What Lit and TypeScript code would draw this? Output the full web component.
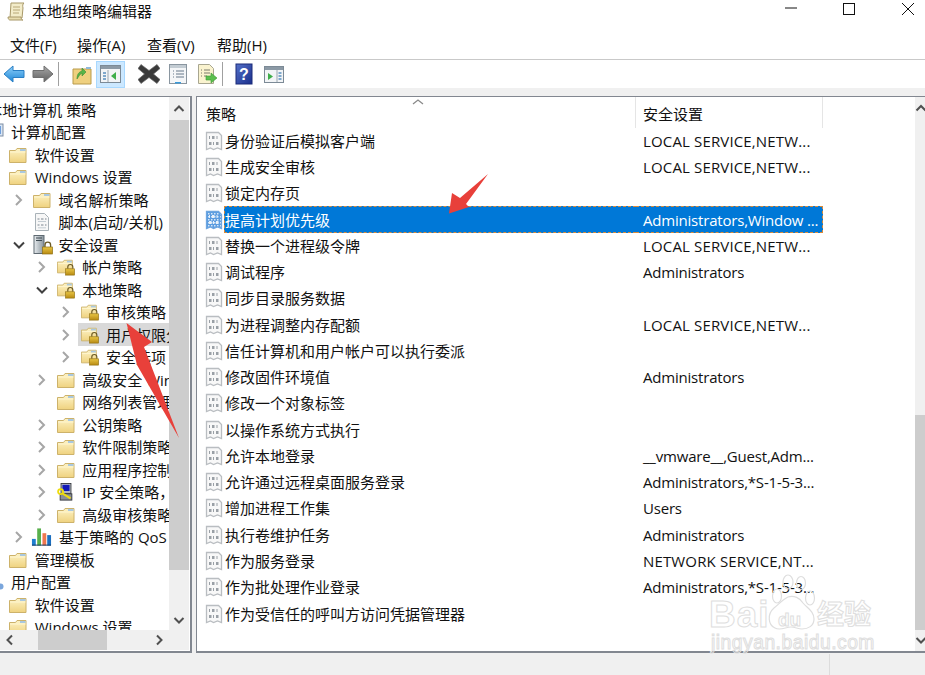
import { LitElement, html, css, svg } from "lit";
import { customElement } from "lit/decorators.js";

type Row = { t: string; d: number; c?: "r" | "d"; i: string; sel?: boolean };

const TREE: Row[] = [
  { t: "本地计算机 策略", d: -1, i: "none" },
  { t: "计算机配置", d: 0, i: "pc" },
  { t: "软件设置", d: 1, i: "folder" },
  { t: "Windows 设置", d: 1, i: "folder" },
  { t: "域名解析策略", d: 2, c: "r", i: "folder" },
  { t: "脚本(启动/关机)", d: 2, i: "script" },
  { t: "安全设置", d: 2, c: "d", i: "server" },
  { t: "帐户策略", d: 3, c: "r", i: "lock" },
  { t: "本地策略", d: 3, c: "d", i: "lock" },
  { t: "审核策略", d: 4, c: "r", i: "lock" },
  { t: "用户权限分配", d: 4, c: "r", i: "lock", sel: true },
  { t: "安全选项", d: 4, c: "r", i: "lock" },
  { t: "高级安全 Windows 防火墙", d: 3, c: "r", i: "folder" },
  { t: "网络列表管理器策略", d: 3, i: "folder" },
  { t: "公钥策略", d: 3, c: "r", i: "folder" },
  { t: "软件限制策略", d: 3, c: "r", i: "folder" },
  { t: "应用程序控制策略", d: 3, c: "r", i: "folder" },
  { t: "IP 安全策略，在 本地计算机", d: 3, c: "r", i: "ip" },
  { t: "高级审核策略配置", d: 3, c: "r", i: "folder" },
  { t: "基于策略的 QoS", d: 2, c: "r", i: "qos" },
  { t: "管理模板", d: 1, i: "folder" },
  { t: "用户配置", d: 0, i: "user" },
  { t: "软件设置", d: 1, i: "folder" },
  { t: "Windows 设置", d: 1, i: "folder" },
];

const LS = "LOCAL SERVICE,NETW...";
const POLICIES: [string, string][] = [
  ["身份验证后模拟客户端", LS],
  ["生成安全审核", LS],
  ["锁定内存页", ""],
  ["提高计划优先级", "Administrators,Window ..."],
  ["替换一个进程级令牌", LS],
  ["调试程序", "Administrators"],
  ["同步目录服务数据", ""],
  ["为进程调整内存配额", LS],
  ["信任计算机和用户帐户可以执行委派", ""],
  ["修改固件环境值", "Administrators"],
  ["修改一个对象标签", ""],
  ["以操作系统方式执行", ""],
  ["允许本地登录", "__vmware__,Guest,Adm..."],
  ["允许通过远程桌面服务登录", "Administrators,*S-1-5-3..."],
  ["增加进程工作集", "Users"],
  ["执行卷维护任务", "Administrators"],
  ["作为服务登录", "NETWORK SERVICE,NT..."],
  ["作为批处理作业登录", "Administrators,*S-1-5-3..."],
  ["作为受信任的呼叫方访问凭据管理器", ""],
];

const folderShape = svg`
  <path d="M.5 3.500h6l1.500-2h9v14h-16.500z" fill="url(#fld)" stroke="#cdb26a" stroke-width="1"/>
  <path d="M11 2h5.500v2H11z" fill="#a9c8e0"/>
  <path d="M1 5h15.500" stroke="#fff6d0" stroke-width="1"/>`;
const lockShape = svg`
  <path d="M12 11V9a2.800 2.800 0 0 1 5.600 0v2" fill="none" stroke="#6b5a24" stroke-width="1.300"/>
  <rect x="9.500" y="11" width="10" height="7" fill="url(#gold)" stroke="#8f6f12" stroke-width=".7"/>`;

function treeIcon(kind: string) {
  switch (kind) {
    case "folder":
      return html`<svg class="ti" viewBox="0 0 18 18"><g transform="translate(0 1)">${folderShape}</g></svg>`;
    case "lock":
      return html`<svg class="ti" viewBox="0 0 20 18">${folderShape}${lockShape}</svg>`;
    case "script":
      return html`<svg class="ti" viewBox="0 0 18 18">
        <path d="M2.500 .5h9l4 4v13h-13z" fill="#f7f7f7" stroke="#a9b2b8"/>
        <path d="M4.500 6h2M8 6h2.500M12 6h1.500M4.500 12h2M8 12h2.500M12 12h1.500" stroke="#7a848e"/>
        <path d="M5 8.500h8M5 14.800h8" stroke="#c4ccd2"/>
      </svg>`;
    case "server":
      return html`<svg class="ti tall" viewBox="0 0 20 20">
        <rect x="1" y="0.500" width="10" height="18" fill="url(#srv)" stroke="#5f6a72"/>
        <path d="M3 3h6M3 5.500h6" stroke="#3e4a52" stroke-width="1.200"/>
        <g transform="translate(0 1)">${lockShape}</g>
      </svg>`;
    case "pc":
      return html`<svg class="ti" viewBox="0 0 18 18">
        <rect x="1" y="1" width="16" height="12" fill="#d9e6f5" stroke="#7e8ea3"/>
        <rect x="3" y="3" width="12" height="8" fill="#6f9fdc"/>
        <path d="M4 15h10v2H4z" fill="#aeb8c4"/>
      </svg>`;
    case "user":
      return html`<svg class="ti" viewBox="0 0 18 18">
        <circle cx="14.500" cy="13.500" r="3" fill="#7ba6dc"/>
      </svg>`;
    case "ip":
      return html`<svg class="ti" viewBox="0 0 20 20">
        <rect x="4.500" y=".5" width="11" height="11" fill="#bfc3c9" stroke="#33363c"/>
        <rect x="6" y="2" width="8" height="7" fill="#1219b8"/>
        <rect x="3.500" y="12" width="13" height="7" fill="#8b8f96" stroke="#33363c"/>
        <circle cx="4" cy="9.500" r="2.800" fill="none" stroke="#eedc10" stroke-width="2"/>
        <path d="M6 11.500l9 5.500" stroke="#eedc10" stroke-width="2.400"/>
      </svg>`;
    case "qos":
      return html`<svg class="ti wide" viewBox="0 0 22 20">
        <path d="M1 12h4v7H1z" fill="#1f7fd0"/>
        <path d="M6.500 1h4v18h-4z" fill="#58b04c"/>
        <path d="M12 6h4v13h-4z" fill="#ee7750"/>
        <path d="M17 8h4v11h-4z" fill="#1b6fc0"/>
        <path d="M1 18.500h20" stroke="#123a66"/>
      </svg>`;
    default:
      return html`<span class="ti"></span>`;
  }
}

function chevron(c?: "r" | "d") {
  if (c === "r")
    return html`<svg class="chev" viewBox="0 0 24 16"><path d="M6 3l5 5-5 5" fill="none" stroke="#a6a6a6" stroke-width="2"/></svg>`;
  if (c === "d")
    return html`<svg class="chev" viewBox="0 0 24 16"><path d="M4 5.500l5 5 5-5" fill="none" stroke="#404040" stroke-width="2"/></svg>`;
  return html`<span class="chev"></span>`;
}

function policyIcon(sel: boolean) {
  const a = sel ? "url(#dith)" : "#f8f8f8";
  const s = sel ? "#6ea6e0" : "#b9bdc1";
  const d = sel ? "#e8f1fa" : "#9aa0a6";
  return html`<svg class="pi" viewBox="0 0 18 20">
    <path d="M1.500 1.500h12l3 3v14l-4-1.500-4 1.500-3-1.500-4 1.500z" fill="${a}" stroke="${s}" stroke-width="1.300"/>
    <path d="M4 5h1v3H4zM7 5h2.500v3H7zM11.500 5h1v3h-1zM4 11h2.500v3H4zM8 11h1v3H8zM11 11h2.500v3H11z" fill="${d}"/>
  </svg>`;
}

const chevUp = html`<svg class="sb" viewBox="0 0 20 20"><path d="M5.500 12.500l4.500-4.500 4.500 4.500" fill="none" stroke="#505050" stroke-width="2"/></svg>`;
const chevDn = html`<svg class="sb" viewBox="0 0 20 20"><path d="M5.500 8l4.500 4.500 4.500-4.500" fill="none" stroke="#505050" stroke-width="2"/></svg>`;
const chevL = html`<svg class="sb" viewBox="0 0 20 20"><path d="M12 5.500l-4.500 4.500 4.500 4.500" fill="none" stroke="#505050" stroke-width="2"/></svg>`;
const chevR = html`<svg class="sb" viewBox="0 0 20 20"><path d="M8 5.500l4.500 4.500-4.500 4.500" fill="none" stroke="#505050" stroke-width="2"/></svg>`;

@customElement("app-root")
export class AppRoot extends LitElement {
  static styles = css`
    :host {
      display: block;
      width: 925px;
      height: 675px;
      font-family: "Open Sans", "Noto Sans CJK SC", sans-serif;
      font-size: 15px;
      color: #111;
    }
    .win {
      position: relative;
      width: 925px;
      height: 675px;
      overflow: hidden;
      background: #f0f0f0;
      display: flex;
      flex-direction: column;
    }
    .defs { position: absolute; width: 0; height: 0; }
    .title {
      height: 30px;
      background: #fff;
      display: flex;
      align-items: center;
      padding-left: 7px;
      flex: none;
    }
    .title .ico { width: 19px; height: 20px; margin-right: 6px; margin-top: -6px; }
    .title span { line-height: 20px; margin-top: -8px; }
    .ctlbox { flex: 1; height: 30px; display: flex; justify-content: flex-end; }
    .ctlbox svg { width: 145px; height: 30px; }
    .menu {
      height: 29px;
      background: #fff;
      display: flex;
      gap: 20px;
      padding-left: 10px;
      align-items: center;
      flex: none;
      border-bottom: 1px solid #c9c9c9;
    }
    .menu span { line-height: 20px; min-width: 50px; }
    .menu span:first-child { min-width: 47px; }
    .tools {
      height: 28px;
      background: #fff;
      display: flex;
      align-items: center;
      flex: none;
    }
    .btn {
      width: 29px;
      height: 27px;
      display: flex;
      align-items: center;
      justify-content: center;
      flex: none;
      box-sizing: border-box;
    }
    .btn.first { margin-left: -1px; }
    .btn.hov { background: #cce8ff; border: 1px solid #a8d8ff; }
    .btn svg { width: 22px; height: 22px; display: block; }
    .sep { width: 1px; height: 24px; background: #a0a0a0; flex: none; }
    .m8 { margin: 0 8px 0 1px; }
    .m9 { margin-left: 9px; }
    .sep2 { margin: 0 6px 0 1px; }
    .ml1 { margin-left: 1px; }
    .main {
      flex: none;
      height: 557px;
      margin-top: 8px;
      display: flex;
      gap: 4px;
    }
    .left, .right {
      border: 1px solid #828790;
      border-bottom-width: 2px;
      background: #fff;
      box-sizing: border-box;
      height: 557px;
      overflow: hidden;
    }
    .left {
      width: 192px;
      border-left: 0;
      border-right-width: 2px;
      display: grid;
      grid-template-columns: 169px 20px;
      grid-template-rows: 533px 20px;
    }
    .right {
      width: 729px;
      flex: none;
      display: flex;
      border-right: 0;
    }
    .tree { overflow: hidden; padding-top: 1.5px; }
    .row {
      height: 22.5px;
      display: flex;
      align-items: center;
      white-space: nowrap;
    }
    .chev { width: 24px; height: 16px; flex: none; display: block; }
    .lbl {
      display: flex;
      align-items: center;
      flex: none;
      height: 23px;
      padding-left: 3px;
      margin-left: -3px;
      padding-right: 3px;
    }
    .lbl.sel { background: #d9d9d9; }
    .ti { width: 18px; height: 18px; flex: none; display: block; margin-right: 7.5px; margin-left: -0.5px; }
    .ti.tall { width: 20px; height: 20px; margin-right: 5.500px; }
    .ti.wide { width: 21px; height: 20px; margin-left: -3px; margin-right: 7.500px; }
    .row .txt { line-height: 20px; }
    .vbar {
      background: #f0f0f0;
      display: flex;
      flex-direction: column;
      flex: none;
      width: 20px;
    }
    .thumb { background: #cdcdcd; flex: none; }
    .sb { width: 20px; height: 20px; display: block; flex: none; }
    .vbar .sb.top { height: 23px; }
    .vthumb { height: 450px; }
    .spacer { flex: 1; }
    .hbar {
      background: #f0f0f0;
      display: flex;
      align-items: center;
      height: 20px;
    }
    .hthumb { width: 69px; height: 20px; margin-left: 18px; }
    .corner { background: #f0f0f0; }
    .list { flex: 1; min-width: 0; position: relative; }
    .head {
      height: 30.6px;
      display: flex;
      width: 626px;
    }
    .hcell {
      display: flex;
      align-items: center;
      padding-left: 9px;
      box-sizing: border-box;
      border-right: 1px solid #e5e5e5;
    }
    .hcell span { line-height: 20px; margin-top: 3px; }
    .c1 { width: 439px; flex: none; position: relative; }
    .c2 { width: 187px; flex: none; padding-left: 7px; }
    .sort { position: absolute; left: 215px; top: 1px; width: 12px; height: 7px; }
    .prow { display: flex; height: 26.28px; width: 626px; align-items: center; white-space: nowrap; }
    .pname {
      width: 439px;
      flex: none;
      display: flex;
      align-items: center;
      padding-left: 8px;
      box-sizing: border-box;
      height: 100%;
    }
    .pi { width: 18px; height: 20px; flex: none; display: block; margin-right: 1px; }
    .ptext { padding-left: 1px; line-height: 20px; flex: 1; height: 100%; display: flex; align-items: center; }
    .psec {
      padding-left: 7px;
      width: 187px;
      box-sizing: border-box;
      line-height: 20px;
      height: 100%;
      display: flex;
      align-items: center;
      letter-spacing: -0.2px;
    }
    .psec.caps { letter-spacing: 0.15px; }
    .prow.sel .ptext, .prow.sel .psec {
      background: #0078d7;
      color: #fff;
      border-top: 1px dashed #d98a3a;
      border-bottom: 1px dashed #d98a3a;
      box-sizing: border-box;
    }
    .prow.sel .ptext { border-left: 1px dashed #d98a3a; padding-left: 0; }
    .prow.sel .psec { border-right: 1px dashed #d98a3a; }
    .rbar {
      width: 10px;
      margin-left: auto;
      background: #f0f0f0;
      flex: none;
      display: flex;
      flex-direction: column;
      overflow: hidden;
    }
    .rup { height: 318px; flex: none; overflow: hidden; }
    .rup svg { margin-top: 1px; margin-left: -4px; }
    .rthumb { height: 215px; }
    .rdn svg { margin-left: -4px; }
    .status {
      flex: 1;
      display: flex;
      justify-content: flex-end;
    }
    .status div { width: 95px; border-left: 1px solid #dcdcdc; margin-top: 1px; }
    .over { position: absolute; left: 0; top: 0; width: 925px; height: 675px; pointer-events: none; }
    .wm { position: absolute; color: transparent; -webkit-text-stroke: 1px #dedede; white-space: nowrap; pointer-events: none; }
    .wm.bai { left: 709px; top: 595px; font: 700 37px/40px "Liberation Sans", sans-serif; letter-spacing: 1px; }
    .wm.du { left: 778px; top: 609px; font: 700 19px/22px "Liberation Sans", sans-serif; }
    .wm.jy { left: 817px; top: 597px; font: 700 27px/32px "Noto Sans CJK SC", sans-serif; }
    .wm.url { left: 711px; top: 631px; font: 400 19.300px/24px "Liberation Sans", sans-serif; letter-spacing: .5px; }
  `;

  render() {
    return html`<div class="win">
      <svg class="defs" aria-hidden="true">
        <defs>
          <linearGradient id="fld" x1="0" y1="0" x2="0" y2="1"><stop offset="0" stop-color="#fdf3c6"/><stop offset="1" stop-color="#efd27f"/></linearGradient>
          <linearGradient id="gold" x1="0" y1="0" x2="0" y2="1"><stop offset="0" stop-color="#e8c544"/><stop offset="1" stop-color="#b88a12"/></linearGradient>
          <linearGradient id="srv" x1="0" y1="0" x2="1" y2="0"><stop offset="0" stop-color="#e8ecef"/><stop offset="1" stop-color="#87939b"/></linearGradient>
          <linearGradient id="blu" x1="0" y1="0" x2="0" y2="1"><stop offset="0" stop-color="#8ed0fa"/><stop offset="1" stop-color="#1d86d6"/></linearGradient>
          <linearGradient id="gry" x1="0" y1="0" x2="0" y2="1"><stop offset="0" stop-color="#a8a8a8"/><stop offset="1" stop-color="#606060"/></linearGradient>
          <linearGradient id="hlp" x1="0" y1="0" x2="1" y2="1"><stop offset="0" stop-color="#5470c8"/><stop offset="1" stop-color="#1a2f8c"/></linearGradient>
          <pattern id="dith" width="3" height="3" patternUnits="userSpaceOnUse"><rect width="3" height="3" fill="#5a9ce0"/><rect width="1.500" height="1.500" fill="#d5e6f6"/></pattern>
        </defs>
      </svg>

      <div class="title">
        <svg class="ico" viewBox="0 0 19 20">
          <path d="M4 1h13c-1.500 1-1.500 3-1 5l-1 10H3z" fill="#f3ecc9" stroke="#a89868"/>
          <path d="M1 15h13c0 2 1 3 2 3H3c-1 0-2-1-2-3z" fill="#e8dcae" stroke="#a89868"/>
          <path d="M6 5h7M6 8h7M6 11h6" stroke="#b8a878"/>
        </svg>
        <span>本地组策略编辑器</span>
        <div class="ctlbox">
          <svg viewBox="0 0 145 30">
            <path d="M5 8h12" stroke="#111"/>
            <rect x="63.500" y="3.500" width="11" height="11" fill="none" stroke="#111"/>
            <path d="M122 3l12 12M134 3l-12 12" stroke="#111"/>
          </svg>
        </div>
      </div>

      <div class="menu">
        <span>文件(F)</span><span>操作(A)</span><span>查看(V)</span><span>帮助(H)</span>
      </div>

      <div class="tools">
        <div class="btn first"><svg viewBox="0 0 22 22"><path d="M1 11l9-8v4.500h11v7H10V19z" fill="url(#blu)" stroke="#2a7fc4"/></svg></div>
        <div class="btn"><svg viewBox="0 0 22 22"><path d="M21 11l-9-8v4.500H1v7h11V19z" fill="url(#gry)" stroke="#6f6f6f"/></svg></div>
        <div class="sep m8"></div>
        <div class="btn"><svg viewBox="0 0 22 22">
          <path d="M2 6h18v15H2z" fill="#efd07f" stroke="#b99b4c"/>
          <path d="M15 4h5v2h-5z" fill="#8fb8d8"/>
          <path d="M6 16c0-5 2-7 5-8V5l4 4-4 4v-3c-2 1-3 3-5 6z" fill="#58b548" stroke="#3e8d34" stroke-width=".6"/>
        </svg></div>
        <div class="btn hov"><svg viewBox="0 0 22 22">
          <rect x=".5" y="2.500" width="20" height="17" fill="#f2f4f6" stroke="#7c8a96"/>
          <path d="M1 3h19v3H1z" fill="#8b99a5"/>
          <path d="M3 9h3v2H3zM3 12h3v2H3zM3 15h3v2H3z" fill="#7fa8cc"/>
          <path d="M8 7v12" stroke="#9aa6b0"/>
          <path d="M16 9v8l-5-4z" fill="#3fae4a"/>
        </svg></div>
        <div class="btn m9"><svg viewBox="0 0 22 22"><path d="M3 1.500l8 6 8-6 3 4-6.500 5.500 6.500 5.500-3 4-8-6-8 6-3-4L6.500 11 0 5.500z" fill="#3a3a3a" stroke="#6a6a6a" stroke-width=".7"/></svg></div>
        <div class="btn"><svg viewBox="0 0 22 22">
          <rect x="2.500" y="1.500" width="17" height="19" fill="#f4f6f8" stroke="#8a96a0"/>
          <path d="M3 2h16v3H3z" fill="#c3ccd3"/>
          <path d="M6 8h1M9 8h8M6 11h1M9 11h8M6 14h1M9 14h8" stroke="#66788a"/>
          <path d="M8 19h6v1.500H8z" fill="#3a9ad9"/>
        </svg></div>
        <div class="btn"><svg viewBox="0 0 22 22">
          <path d="M2.500 1.500h11l4 4v15h-15z" fill="#faf3cf" stroke="#a8a690"/>
          <path d="M5 7h1M8 7h6M5 10h1M8 10h6M5 13h1M8 13h3" stroke="#7b7b6b"/>
          <path d="M10 13h5v-3l6 5-6 5v-3h-5z" fill="#5cbf4f" stroke="#3d9b36" stroke-width=".6"/>
        </svg></div>
        <div class="sep sep2"></div>
        <div class="btn"><svg viewBox="0 0 22 22">
          <rect x="3" y="1" width="16" height="20" fill="url(#hlp)" stroke="#1b2b78"/>
          <text x="11" y="17" text-anchor="middle" font-size="16" font-weight="700" font-family="Liberation Sans" fill="#fff">?</text>
        </svg></div>
        <div class="btn ml1"><svg viewBox="0 0 22 22">
          <rect x="1.500" y="3.500" width="19" height="16" fill="#f2f4f6" stroke="#7c8a96"/>
          <path d="M2 4h18v3H2z" fill="#8b99a5"/>
          <path d="M5 10v7l5-3.500z" fill="#3fae4a"/>
          <path d="M14 7v12" stroke="#9aa6b0"/>
          <path d="M15.500 9h3v2h-3zM15.500 12h3v2h-3zM15.500 15h3v2h-3z" fill="#7fa8cc"/>
        </svg></div>
      </div>

      <div class="main">
        <div class="left">
          <div class="tree">
            ${TREE.map(
              (r) => html`<div class="row" style="margin-left:${23.75 * r.d - 38}px">
                ${chevron(r.c)}
                <div class="lbl ${r.sel ? "sel" : ""}">
                  ${treeIcon(r.i)}<span class="txt">${r.t}</span>
                </div>
              </div>`
            )}
          </div>
          <div class="vbar">
            <svg class="sb top" viewBox="0 0 20 23"><path d="M5.500 14l4.500-4.500 4.500 4.500" fill="none" stroke="#505050" stroke-width="2"/></svg>
            <div class="thumb vthumb"></div>
            <div class="spacer"></div>
            ${chevDn}
          </div>
          <div class="hbar">
            ${chevL}
            <div class="thumb hthumb"></div>
            <div class="spacer"></div>
            ${chevR}
          </div>
          <div class="corner"></div>
        </div>

        <div class="right">
          <div class="list">
            <div class="head">
              <div class="hcell c1">
                <svg class="sort" viewBox="0 0 12 7"><path d="M1 6l5-4 5 4" fill="none" stroke="#8a8a8a" stroke-width="1.300"/></svg>
                <span>策略</span>
              </div>
              <div class="hcell c2"><span>安全设置</span></div>
            </div>
            ${POLICIES.map(
              ([n, v], i) => html`<div class="prow ${i === 3 ? "sel" : ""}">
                <div class="pname">${policyIcon(i === 3)}<div class="ptext">${n}</div></div>
                <div class="psec ${/^[A-Z ]{4}/.test(v) ? "caps" : ""}">${v}</div>
              </div>`
            )}
          </div>
          <div class="rbar">
            <div class="rup">${chevUp}</div>
            <div class="thumb rthumb"></div>
            <div class="rdn">${chevDn}</div>
          </div>
        </div>
      </div>

      <div class="status"><div></div></div>

      <div class="wm bai">Bai</div>
      <div class="wm du">du</div>
      <div class="wm jy">经验</div>
      <div class="wm url">jingyan.baidu.com</div>
      <svg class="over" viewBox="0 0 925 675">
        <g fill="none" stroke="#dedede" stroke-width="1.200">
          <path d="M775 628c-7-3-8-14-1-20 5-4 8-8 14-11 6-2 12 1 15 6 4 5 11 8 11 16 0 7-6 10-12 10-4 0-7-2-11-2-5 0-11 4-16 1z"/>
          <ellipse cx="777" cy="596" rx="4.500" ry="7"/>
          <ellipse cx="788" cy="582" rx="5" ry="7"/>
          <ellipse cx="801" cy="583" rx="4.500" ry="6.500"/>
          <ellipse cx="810" cy="598" rx="4.500" ry="7"/>
        </g>
        <path d="M449 213.500L452 193 460 198 488 174 466 204 469 207z" fill="#e8403a"/>
        <path d="M126.500 323L152 342 144 347 179 438 137 365z" fill="#e8403a"/>
      </svg>
    </div>`;
  }
}
